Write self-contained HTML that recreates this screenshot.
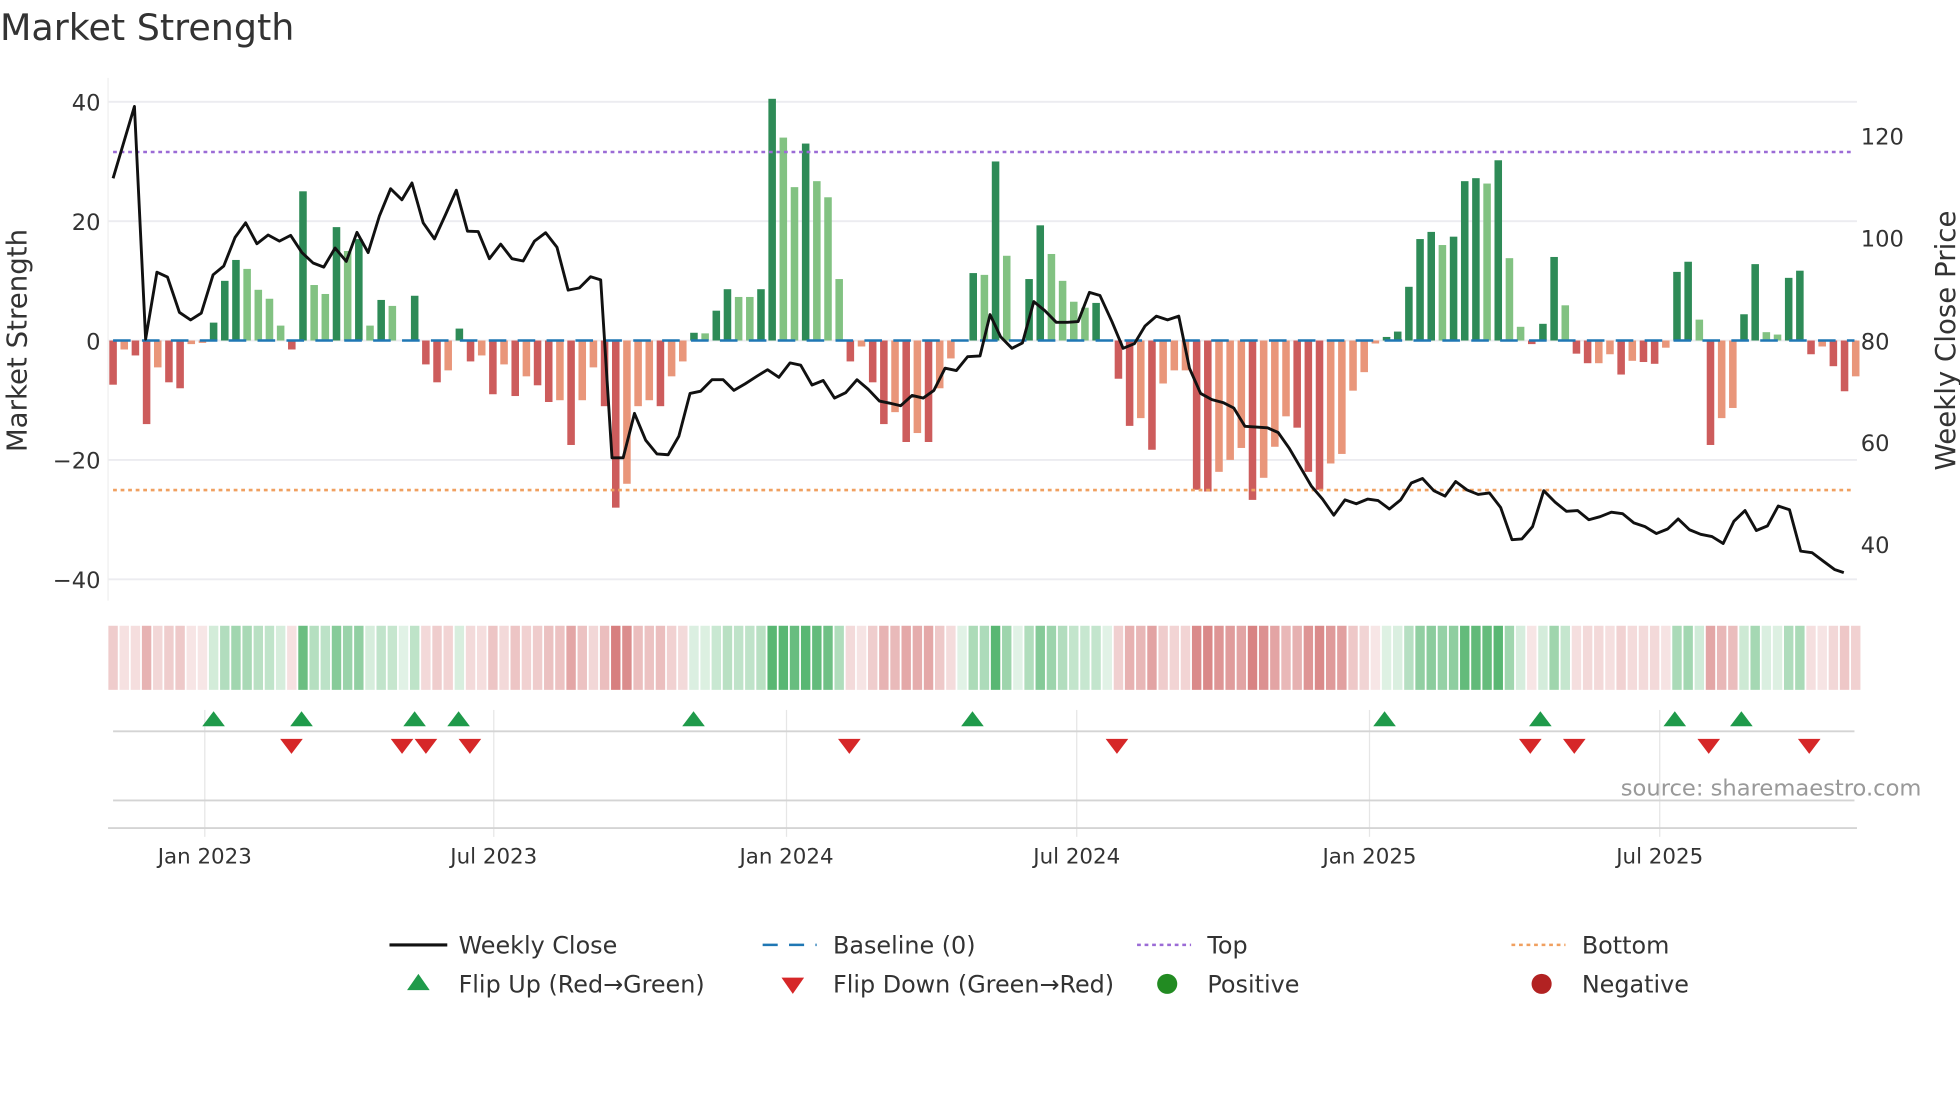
<!DOCTYPE html>
<html><head><meta charset="utf-8"><style>
html,body{margin:0;padding:0;background:#fff;}
svg{display:block;}
text{font-family:"DejaVu Sans","Liberation Sans",sans-serif;fill:#333;}
</style></head><body>
<svg id="s" width="1960" height="1102" viewBox="0 0 1560 877" preserveAspectRatio="none" xmlns="http://www.w3.org/2000/svg">
<text x="0" y="32" font-size="29">Market Strength</text>
<g id="grid"></g>
<g id="heat"></g>
<g id="bars"></g>
<line x1="90" y1="271" x2="1476" y2="271" stroke="#1f77b4" stroke-width="2" stroke-dasharray="14,9"/>
<line x1="90" y1="121" x2="1476" y2="121" stroke="#9b6bd6" stroke-width="2" stroke-dasharray="3,3"/>
<line x1="90" y1="390" x2="1476" y2="390" stroke="#f0a060" stroke-width="2" stroke-dasharray="3,3"/>
<polyline id="price" fill="none" stroke="#111" stroke-width="2.3" stroke-linejoin="round"/>
<g id="marks"></g>
<g font-size="18">
<text x="80" y="88" text-anchor="end">40</text>
<text x="80" y="183" text-anchor="end">20</text>
<text x="80" y="278" text-anchor="end">0</text>
<text x="80" y="373" text-anchor="end">−20</text>
<text x="80" y="468" text-anchor="end">−40</text>
<text x="1481" y="115">120</text>
<text x="1481" y="196">100</text>
<text x="1481" y="278">80</text>
<text x="1481" y="359">60</text>
<text x="1481" y="440">40</text>
</g>
<text transform="translate(21,271) rotate(-90)" text-anchor="middle" font-size="22">Market Strength</text>
<text transform="translate(1556,271) rotate(-90)" text-anchor="middle" font-size="22">Weekly Close Price</text>
<g font-size="17" text-anchor="middle">
<text x="163" y="687">Jan 2023</text>
<text x="393" y="687">Jul 2023</text>
<text x="626" y="687">Jan 2024</text>
<text x="857" y="687">Jul 2024</text>
<text x="1090" y="687">Jan 2025</text>
<text x="1321" y="687">Jul 2025</text>
</g>
<text x="1290" y="633" font-size="18" style="fill:#999">source: sharemaestro.com</text>
<g font-size="19">
<line x1="310" y1="752" x2="356" y2="752" stroke="#111" stroke-width="2.5"/>
<text x="365" y="759">Weekly Close</text>
<line x1="607" y1="752" x2="650" y2="752" stroke="#1f77b4" stroke-width="2" stroke-dasharray="12,9"/>
<text x="663" y="759">Baseline (0)</text>
<line x1="905" y1="752" x2="948" y2="752" stroke="#9b6bd6" stroke-width="2" stroke-dasharray="3,3"/>
<text x="961" y="759">Top</text>
<line x1="1203" y1="752" x2="1246" y2="752" stroke="#f0a060" stroke-width="2" stroke-dasharray="3,3"/>
<text x="1259" y="759">Bottom</text>
<polygon points="324,788 342,788 333,775" fill="#1f9a4a"/>
<text x="365" y="790">Flip Up (Red→Green)</text>
<polygon points="622,778 640,778 631,791" fill="#d62728"/>
<text x="663" y="790">Flip Down (Green→Red)</text>
<circle cx="929" cy="783" r="8" fill="#228b22"/>
<text x="961" y="790">Positive</text>
<circle cx="1227" cy="783" r="8" fill="#b22222"/>
<text x="1259" y="790">Negative</text>
</g>
</svg>
<script>
var NS="http://www.w3.org/2000/svg";
function el(p,t,a){var e=document.createElementNS(NS,t);for(var k in a)e.setAttribute(k,a[k]);document.getElementById(p).appendChild(e);return e;}
[81,176,271,366,461].forEach(function(y){el("grid","line",{x1:86,x2:1478,y1:y,y2:y,stroke:"#ececf0","stroke-width":1.5});});
el("grid","line",{x1:86,x2:86,y1:62,y2:478,stroke:"#eeeeee","stroke-width":1});
[163,393,626,857,1090,1321].forEach(function(x){el("grid","line",{x1:x,x2:x,y1:565,y2:666,stroke:"#e6e6e6","stroke-width":1});});
el("grid","line",{x1:90,x2:1476,y1:582,y2:582,stroke:"#d4d4d4","stroke-width":1.5});
el("grid","line",{x1:90,x2:1476,y1:637,y2:637,stroke:"#d4d4d4","stroke-width":1.5});
el("grid","line",{x1:86,x2:1478,y1:659,y2:659,stroke:"#d4d4d4","stroke-width":1.5});
var B=[[-7.4,1],[-1.5,0],[-2.5,1],[-14,1],[-4.5,0],[-7,1],[-8,1],[-0.6,0],[-0.4,0],[3,1],[10,1],[13.5,1],[12,0],[8.5,0],[7,0],[2.5,0],[-1.5,1],[25,1],[9.3,0],[7.8,0],[19,1],[15,0],[17,1],[2.5,0],[6.8,1],[5.8,0],[0,0],[7.5,1],[-4,1],[-7,1],[-5,0],[2,1],[-3.5,1],[-2.5,0],[-9,1],[-4,0],[-9.3,1],[-6,0],[-7.5,1],[-10.3,1],[-10,0],[-17.5,1],[-10,0],[-4.5,0],[-11,1],[-28,1],[-24,0],[-11,0],[-10,0],[-11,1],[-6,0],[-3.5,0],[1.3,1],[1.2,0],[5,1],[8.6,1],[7.3,0],[7.3,0],[8.6,1],[40.5,1],[34,0],[25.7,0],[33,1],[26.7,0],[24,0],[10.3,0],[-3.5,1],[-1,0],[-7,1],[-14,1],[-12,0],[-17,1],[-15.5,0],[-17,1],[-8,0],[-3,0],[0,0],[11.3,1],[11,0],[30,1],[14.2,0],[0,0],[10.3,1],[19.3,1],[14.5,0],[10,0],[6.5,0],[5.5,0],[6.3,1],[0,0],[-6.4,1],[-14.3,1],[-13,0],[-18.3,1],[-7.2,0],[-5,0],[-5,0],[-25,1],[-25.3,1],[-22,0],[-20,0],[-18,0],[-26.7,1],[-23,0],[-17.8,0],[-12.7,0],[-14.6,1],[-22,1],[-25,1],[-20.6,0],[-19,0],[-8.4,0],[-5.3,0],[-0.5,0],[0.6,1],[1.5,1],[9,1],[17,1],[18.2,1],[16,0],[17.4,1],[26.7,1],[27.2,1],[26.3,0],[30.2,1],[13.8,0],[2.3,0],[-0.6,1],[2.8,1],[14,1],[5.9,0],[-2.2,1],[-3.8,1],[-3.8,0],[-2.3,0],[-5.7,1],[-3.4,0],[-3.6,1],[-3.9,1],[-1.2,0],[11.5,1],[13.2,1],[3.5,0],[-17.5,1],[-13,0],[-11.3,0],[4.4,1],[12.8,1],[1.4,0],[1,0],[10.5,1],[11.7,1],[-2.3,1],[-1,0],[-4.3,1],[-8.5,1],[-6,0]];
var n=B.length,x0=90,x1=1477,st=(x1-x0)/(n-1);
B.forEach(function(b,i){
 var v=b[0],x=x0+i*st,h=Math.abs(v)*4.75;
 var c=v>=0?(b[1]?"#2e8b57":"#82c282"):(b[1]?"#cd5c5c":"#e9967a");
 if(h>0.3) el("bars","rect",{x:x-3,y:v>=0?271-h:271,width:6,height:h,fill:c});
 var a=Math.min(1,0.18+Math.abs(v)/28*0.8);
 var hc=v>=0?"rgba(60,170,90,"+(a*0.85)+")":"rgba(200,80,80,"+(a*0.75)+")";
 el("heat","rect",{x:x-st/2+0.7,y:498,width:st-1.4,height:51,fill:hc});
});
var Z1=[[181,466],[215,278],[233,886],[251,711],[268,724],[287,816],[305,836],[322,818],[341,718],[358,695],[376,620],[393,582],[411,637],[429,614],[447,630],[465,615],[483,660],[501,687],[518,698],[536,648],[554,683],[571,607],[589,660],[607,564],[625,493],[643,522],[659,478],[677,582],[695,624],[713,560],[730,497],[748,604],[765,605],[783,676],[801,638],[819,676],[837,682],[855,630],[873,608],[891,646],[909,758],[927,752],[945,723],[961,731],[979,1196],[997,1196],[1015,1080],[1033,1150],[1051,1186],[1069,1188],[1086,1140],[1104,1028],[1121,1022],[1139,992],[1157,992],[1174,1020],[1192,1003],[1210,984],[1228,966],[1246,986],[1264,948],[1281,954],[1299,1006],[1317,994],[1335,1040],[1353,1026],[1371,992],[1389,1017],[1407,1048],[1425,1054],[1441,1060],[1459,1033],[1477,1040],[1494,1020],[1512,962],[1530,968],[1548,932]];
var Z2=[[0,930],[16,822],[33,880],[51,910],[68,896],[86,788],[104,812],[122,842],[140,842],[157,840],[175,764],[192,772],[211,840],[229,910],[247,898],[264,852],[282,826],[300,836],[318,826],[335,962],[353,1028],[371,1044],[389,1052],[406,1066],[424,1114],[442,1116],[460,1118],[477,1130],[495,1172],[513,1222],[530,1270],[548,1304],[566,1346],[584,1306],[602,1316],[620,1304],[637,1308],[655,1330],[673,1306],[690,1262],[708,1250],[726,1282],[744,1296],[761,1258],[779,1280],[797,1292],[815,1288],[833,1326],[851,1410],[867,1408],[884,1376],[902,1282],[920,1312],[938,1336],[956,1334],[974,1358],[992,1350],[1010,1338],[1028,1342],[1046,1366],[1064,1376],[1082,1394],[1100,1382],[1117,1356],[1135,1384],[1153,1396],[1171,1402],[1189,1420],[1206,1362],[1224,1334],[1242,1386],[1260,1374],[1277,1322],[1295,1332],[1313,1440],[1331,1444],[1349,1466],[1367,1488],[1382,1496]];
var pts=[];
Z1.forEach(function(p){pts.push((p[0]*0.4975).toFixed(1)+","+(p[1]*0.3046).toFixed(1));});
Z2.forEach(function(p){pts.push((780+p[0]*0.4975).toFixed(1)+","+(p[1]*0.3046).toFixed(1));});
document.getElementById("price").setAttribute("points",pts.join(" "));
[170,240,330,365,552,774,1102,1226,1333,1386].forEach(function(x){el("marks","polygon",{points:(x-9)+",578 "+(x+9)+",578 "+x+",566",fill:"#1f9a4a"});});
[232,320,339,374,676,889,1218,1253,1360,1440].forEach(function(x){el("marks","polygon",{points:(x-9)+",588 "+(x+9)+",588 "+x+",600",fill:"#d62728"});});
</script>
</body></html>
